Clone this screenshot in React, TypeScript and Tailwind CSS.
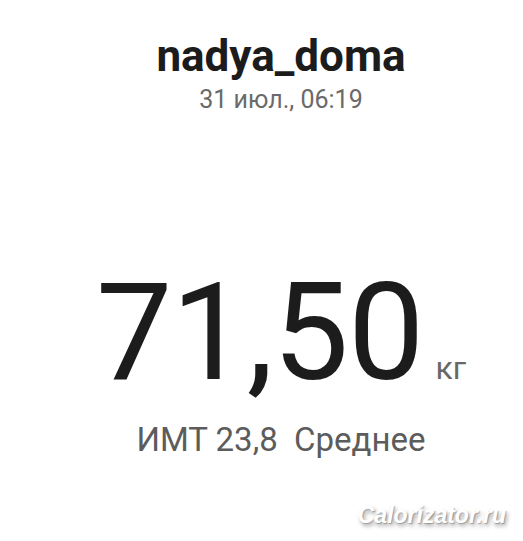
export default function App() {
  return (
    <div
      className="relative w-[523px] h-[541px] bg-white overflow-hidden flex flex-col items-center pl-[39px]"
      style={{ fontFamily: "Roboto, 'Noto Sans', sans-serif" }}
    >
      {/* ── Header ── */}
      <div className="mt-[34px] text-[44px] leading-[44px] font-bold text-[#1c1c1c]">
        nadya_doma
      </div>
      <div className="mt-[9px] text-[25px] leading-[25px] text-[#6a6a6a]">
        31 июл., 06:19
      </div>

      {/* ── Weight ── */}
      <div className="mt-[153px] flex items-baseline">
        <span className="text-[136px] leading-[136px] text-[#1c1c1c] tracking-[-1px]">
          71,50
        </span>
        <span className="ml-[12px] text-[32px] leading-[32px] text-[#686868]">
          кг
        </span>
      </div>

      <div className="mt-[22px] text-[33px] leading-[33px] text-[#5c5c5c] whitespace-pre">
        ИМТ 23,8  Среднее
      </div>

      {/* ── Watermark ── */}
      <div
        className="absolute right-[17px] bottom-[14px] text-[23px] leading-[23px] font-bold italic text-white"
        style={{
          fontFamily: "'Liberation Sans', Arial, sans-serif",
          textShadow: "1px 1px 1px rgba(0,0,0,0.25), 2px 3px 4px rgba(0,0,0,0.35)",
        }}
      >
        Calorizator.ru
      </div>
    </div>
  );
}
